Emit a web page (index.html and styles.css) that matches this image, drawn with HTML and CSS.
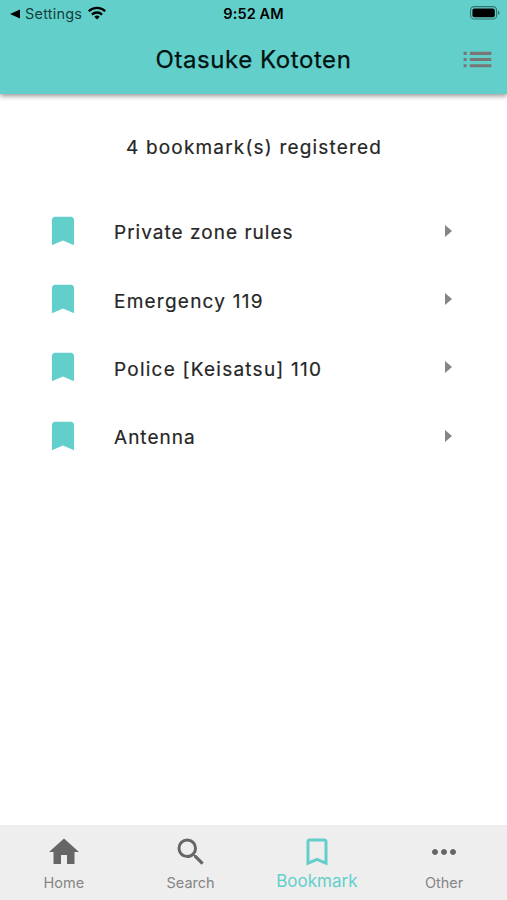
FILE: index.html
```html
<!DOCTYPE html>
<html lang="en">
<head>
<meta charset="utf-8">
<title>Otasuke Kototen</title>
<link rel="stylesheet" href="styles.css">
</head>
<body>
<div class="app">
  <header class="header">
    <div class="status">
      <div class="status-left">
        <svg class="back" viewBox="0 0 10 10"><path d="M10 0.5v9L0 5z"/></svg>
        <span class="settings">Settings</span>
        <svg class="wifi" viewBox="0 0 18 14"><g fill="none" stroke="#000" stroke-width="2.3"><path d="M.8 5.3a11.7 11.7 0 0 1 16.4 0"/><path d="M3.9 8.6a7.3 7.3 0 0 1 10.2 0"/></g><path d="M9 13.6l-2.7-2.9a3.9 3.9 0 0 1 5.4 0z"/></svg>
      </div>
      <span class="time">9:52 AM</span>
      <svg class="battery" viewBox="0 0 30 14"><rect x=".6" y=".6" width="26" height="12.4" rx="3.6" fill="none" stroke="#32736f" stroke-width="1.1"/><rect x="2.4" y="2.4" width="22.4" height="8.8" rx="2"/><path d="M28 4.6c2 .8 2 3.6 0 4.4z" fill="#32736f"/></svg>
    </div>
    <div class="bar">
      <h1 class="title">Otasuke Kototen</h1>
      <svg class="menu" viewBox="0 0 24 24"><path d="M3 13h2v-2H3v2zm0 4h2v-2H3v2zm0-8h2V7H3v2zm4 4h14v-2H7v2zm0 4h14v-2H7v2zM7 7v2h14V7H7z"/></svg>
    </div>
  </header>
  <main class="content">
    <p class="count">4 bookmark(s) registered</p>
    <ul class="list">
      <li class="item"><svg class="mark" viewBox="0 0 24 24"><path d="M17 3H7c-1.100 0-2 .9-2 2v16l7-3 7 3V5c0-1.100-.9-2-2-2z"/></svg><span class="label">Private zone rules</span><svg class="arrow" viewBox="0 0 7 12"><path d="M0 0l7 6-7 6z"/></svg></li>
      <li class="item"><svg class="mark" viewBox="0 0 24 24"><path d="M17 3H7c-1.100 0-2 .9-2 2v16l7-3 7 3V5c0-1.100-.9-2-2-2z"/></svg><span class="label numeric">Emergency 119</span><svg class="arrow" viewBox="0 0 7 12"><path d="M0 0l7 6-7 6z"/></svg></li>
      <li class="item"><svg class="mark" viewBox="0 0 24 24"><path d="M17 3H7c-1.100 0-2 .9-2 2v16l7-3 7 3V5c0-1.100-.9-2-2-2z"/></svg><span class="label numeric">Police [Keisatsu] 110</span><svg class="arrow" viewBox="0 0 7 12"><path d="M0 0l7 6-7 6z"/></svg></li>
      <li class="item"><svg class="mark" viewBox="0 0 24 24"><path d="M17 3H7c-1.100 0-2 .9-2 2v16l7-3 7 3V5c0-1.100-.9-2-2-2z"/></svg><span class="label">Antenna</span><svg class="arrow" viewBox="0 0 7 12"><path d="M0 0l7 6-7 6z"/></svg></li>
    </ul>
  </main>
  <nav class="tabs">
    <a class="tab"><svg class="icon" viewBox="0 0 24 24"><path d="M10 20v-6h4v6h5v-8h3L12 3 2 12h3v8z"/></svg><span>Home</span></a>
    <a class="tab"><svg class="icon" viewBox="0 0 24 24"><path d="M15.500 14h-.79l-.28-.27A6.471 6.471 0 0 0 16 9.500 6.500 6.500 0 1 0 9.500 16c1.610 0 3.090-.59 4.230-1.570l.27.28v.79l5 4.990L20.490 19l-4.990-5zm-6 0C7.010 14 5 11.990 5 9.500S7.010 5 9.500 5 14 7.010 14 9.500 11.990 14 9.500 14z"/></svg><span>Search</span></a>
    <a class="tab active"><svg class="icon" viewBox="0 0 24 24"><path d="M17 3H7c-1.100 0-2 .9-2 2v16l7-3 7 3V5c0-1.100-.9-2-2-2zm0 15l-5-2.180L7 18V5h10v13z"/></svg><span>Bookmark</span></a>
    <a class="tab"><svg class="icon" viewBox="0 0 24 24"><path d="M6 10c-1.100 0-2 .9-2 2s.9 2 2 2 2-.9 2-2-.9-2-2-2zm12 0c-1.100 0-2 .9-2 2s.9 2 2 2 2-.9 2-2-.9-2-2-2zm-6 0c-1.100 0-2 .9-2 2s.9 2 2 2 2-.9 2-2-.9-2-2-2z"/></svg><span>Other</span></a>
  </nav>
</div>
</body>
</html>
```
FILE: styles.css
```css
* { box-sizing: border-box; }
body { margin: 0; font-family: Inter, "Liberation Sans", sans-serif; background: #fff; }
svg { display: block; flex: none; }
.app { display: flex; flex-direction: column; width: 507px; height: 900px; overflow: hidden; }
.header { height: 94px; flex: none; background: #63cfca; box-shadow: 0 2px 5px rgba(0, 0, 0, .42); }
.status { display: grid; grid-template-columns: 1fr auto 1fr; align-items: center; height: 27px; padding: 0 7px 0 10px; }
.status-left { display: flex; align-items: center; }
.back { width: 10px; height: 10px; }
.settings { margin-left: 5px; font-size: 14.500px; line-height: 20px; letter-spacing: .2px; color: #123f3d; width: 57px; white-space: nowrap; }
.wifi { width: 18px; height: 14px; margin-left: 6px; margin-top: -1px; }
.time { margin-right: 3px; font-size: 14.500px; font-weight: 600; letter-spacing: .1px; }
.battery { width: 30px; height: 14px; justify-self: end; margin-top: -1px; }
.bar { display: grid; grid-template-columns: 1fr auto 1fr; align-items: center; height: 65px; padding: 0 11px; }
.title { grid-column: 2; margin: 1px 0 0; font-size: 24px; line-height: 30px; font-weight: 400; letter-spacing: .56px; color: #001211; -webkit-text-stroke: .25px; }
.menu { width: 37px; height: 37px; justify-self: end; fill: #777; }
.content { flex: 1; padding-top: 41px; }
.count { margin: 0; padding-left: 1px; text-align: center; font-size: 19px; line-height: 26px; letter-spacing: 1.180px; color: #262626; -webkit-text-stroke: .2px; }
.list { list-style: none; margin: 35.500px 0 0; padding: 0 55px 0 44px; }
.item { display: flex; align-items: center; height: 68.400px; }
.mark { width: 38px; height: 38px; fill: #63cfca; }
.label { flex: 1; margin: 5px 0 0 32px; font-size: 19px; line-height: 26px; letter-spacing: 1.020px; color: #262626; -webkit-text-stroke: .2px; }
.numeric { letter-spacing: 1.240px; }
.arrow { width: 7px; height: 12px; fill: #858585; }
.tabs { display: grid; grid-template-columns: repeat(4, 1fr); height: 75px; flex: none; background: #eee; color: #858585; }
.tab { display: flex; flex-direction: column; align-items: center; padding: 9px 0 0 1px; font-size: 14.500px; line-height: 20px; letter-spacing: 0; }
.icon { width: 36px; height: 36px; fill: #666; margin-bottom: 2.500px; }
.active { padding-left: 0; color: #63cfca; font-size: 17px; }
.active .icon { fill: #63cfca; margin-bottom: 1px; }
```
